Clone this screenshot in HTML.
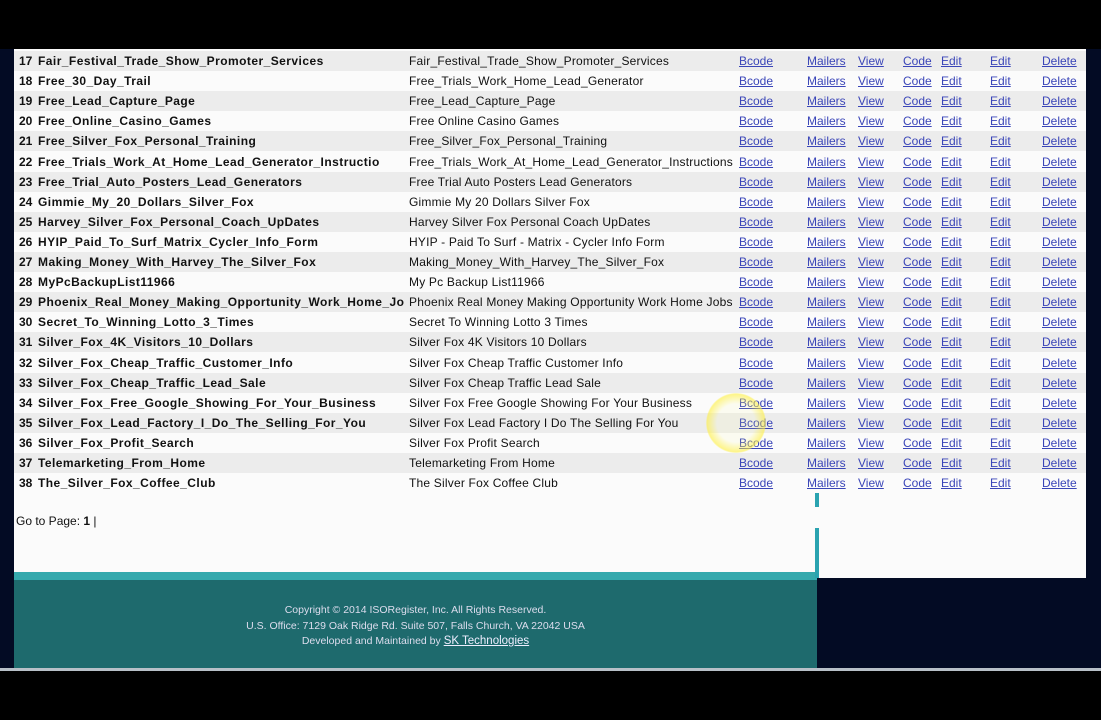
<!DOCTYPE html>
<html><head><style>
body{margin:0;width:1101px;height:720px;background:#000;position:relative;overflow:hidden;font-family:"Liberation Sans",Arial,sans-serif;font-size:12px}
.navy{position:absolute;left:0;top:49px;width:1101px;height:619px;background:#030b24}
.panel{position:absolute;left:14px;top:49px;width:1072px;height:529px;background:#fbfbfb}
.row{position:absolute;left:14px;width:1072px;height:20px;line-height:21px;color:#111}
.row.g{background:#ececec}
.row span{position:absolute;top:0;white-space:nowrap}
.b{font-weight:bold;letter-spacing:.45px}
.n{letter-spacing:.2px}
a{color:#3a45b8;text-decoration:underline}
.foot{position:absolute;left:14px;top:580px;width:803px;height:88px;background:#1e6a6d;color:#dde;text-align:center;font-size:10.5px;line-height:15.5px}
</style></head><body>
<div class="navy"></div>
<div class="panel"></div>
<div id="rows"></div>
<div style="position:absolute;left:16px;top:514px;color:#111">Go to Page: <b>1</b> |</div>
<div style="position:absolute;left:14px;top:572px;width:803px;height:8px;background:#35a9ad"></div>
<div style="position:absolute;left:815px;top:493px;width:4px;height:14px;background:#2aa3b0"></div>
<div style="position:absolute;left:815px;top:528px;width:4px;height:50px;background:#2aa3b0"></div>
<div class="foot"><div style="padding-top:23px">Copyright © 2014 ISORegister, Inc. All Rights Reserved.<br>U.S. Office: 7129 Oak Ridge Rd. Suite 507, Falls Church, VA 22042 USA<br>Developed and Maintained by <a style="color:#eef;font-size:11.5px">SK Technologies</a></div></div>
<div style="position:absolute;left:0;top:668px;width:1101px;height:3px;background:#b8c0c8"></div>
<script>
var d=[["17","Fair_Festival_Trade_Show_Promoter_Services","Fair_Festival_Trade_Show_Promoter_Services"],
["18","Free_30_Day_Trail","Free_Trials_Work_Home_Lead_Generator"],
["19","Free_Lead_Capture_Page","Free_Lead_Capture_Page"],
["20","Free_Online_Casino_Games","Free Online Casino Games"],
["21","Free_Silver_Fox_Personal_Training","Free_Silver_Fox_Personal_Training"],
["22","Free_Trials_Work_At_Home_Lead_Generator_Instructio","Free_Trials_Work_At_Home_Lead_Generator_Instructions"],
["23","Free_Trial_Auto_Posters_Lead_Generators","Free Trial Auto Posters Lead Generators"],
["24","Gimmie_My_20_Dollars_Silver_Fox","Gimmie My 20 Dollars Silver Fox"],
["25","Harvey_Silver_Fox_Personal_Coach_UpDates","Harvey Silver Fox Personal Coach UpDates"],
["26","HYIP_Paid_To_Surf_Matrix_Cycler_Info_Form","HYIP - Paid To Surf - Matrix - Cycler Info Form"],
["27","Making_Money_With_Harvey_The_Silver_Fox","Making_Money_With_Harvey_The_Silver_Fox"],
["28","MyPcBackupList11966","My Pc Backup List11966"],
["29","Phoenix_Real_Money_Making_Opportunity_Work_Home_Jo","Phoenix Real Money Making Opportunity Work Home Jobs"],
["30","Secret_To_Winning_Lotto_3_Times","Secret To Winning Lotto 3 Times"],
["31","Silver_Fox_4K_Visitors_10_Dollars","Silver Fox 4K Visitors 10 Dollars"],
["32","Silver_Fox_Cheap_Traffic_Customer_Info","Silver Fox Cheap Traffic Customer Info"],
["33","Silver_Fox_Cheap_Traffic_Lead_Sale","Silver Fox Cheap Traffic Lead Sale"],
["34","Silver_Fox_Free_Google_Showing_For_Your_Business","Silver Fox Free Google Showing For Your Business"],
["35","Silver_Fox_Lead_Factory_I_Do_The_Selling_For_You","Silver Fox Lead Factory I Do The Selling For You"],
["36","Silver_Fox_Profit_Search","Silver Fox Profit Search"],
["37","Telemarketing_From_Home","Telemarketing From Home"],
["38","The_Silver_Fox_Coffee_Club","The Silver Fox Coffee Club"]];
var h="";
d.forEach(function(r,i){
var t=51+i*20.1;
h+='<div class="row'+(i%2==0?' g':'')+'" style="top:'+t+'px"><span class="b" style="left:5px;letter-spacing:0">'+r[0]+'</span><span class="b" style="left:24px">'+r[1]+'</span><span class="n" style="left:395px">'+r[2]+'</span>'+
'<span style="left:725px"><a>Bcode</a></span><span style="left:793px"><a>Mailers</a></span><span style="left:844px"><a>View</a></span><span style="left:889px"><a>Code</a></span><span style="left:927px"><a>Edit</a></span><span style="left:976px"><a>Edit</a></span><span style="left:1028px"><a>Delete</a></span></div>';});
document.getElementById("rows").innerHTML=h;
</script>
<div style="position:absolute;left:706px;top:393px;width:60px;height:60px;border-radius:50%;background:radial-gradient(circle,rgba(255,255,140,.1) 45%,rgba(255,240,60,.6) 68%,rgba(255,240,60,0) 72%)"></div>
</body></html>
